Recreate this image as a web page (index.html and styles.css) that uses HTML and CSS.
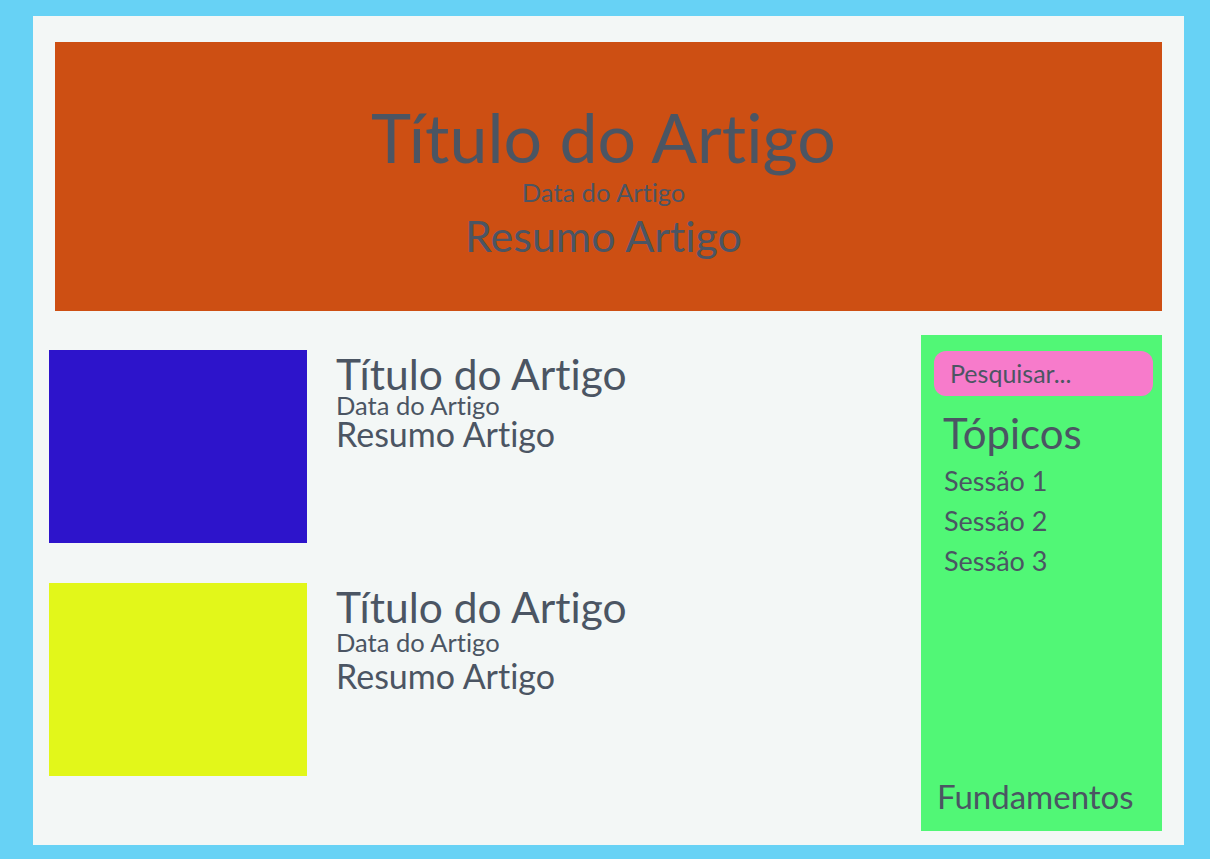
FILE: index.html
```html
<!DOCTYPE html>
<html lang="pt-BR">
<head>
<meta charset="utf-8">
<title>Blog</title>
<link rel="stylesheet" href="styles.css">
</head>
<body>
<div class="page">
  <header class="hero">
    <h1 class="hero-title">Título do Artigo</h1>
    <p class="hero-date">Data do Artigo</p>
    <p class="hero-summary">Resumo Artigo</p>
  </header>
  <div class="content">
    <main class="articles">
      <article class="article">
        <div class="thumb thumb-blue"></div>
        <div class="article-text">
          <h2 class="article-title">Título do Artigo</h2>
          <p class="article-date">Data do Artigo</p>
          <p class="article-summary">Resumo Artigo</p>
        </div>
      </article>
      <article class="article article-alt">
        <div class="thumb thumb-yellow"></div>
        <div class="article-text">
          <h2 class="article-title">Título do Artigo</h2>
          <p class="article-date">Data do Artigo</p>
          <p class="article-summary">Resumo Artigo</p>
        </div>
      </article>
    </main>
    <aside class="sidebar">
      <div class="search">Pesquisar...</div>
      <h3 class="topics-title">Tópicos</h3>
      <ul class="topics">
        <li>Sessão 1</li>
        <li>Sessão 2</li>
        <li>Sessão 3</li>
      </ul>
      <div class="footer-link">Fundamentos</div>
    </aside>
  </div>
</div>
</body>
</html>
```

FILE: styles.css
```css
* { box-sizing: border-box; }
html, body { margin: 0; padding: 0; }
body {
  background: #67d2f5;
  font-family: Lato, "Open Sans", sans-serif;
  font-variant-ligatures: none;
  font-feature-settings: "liga" 0, "clig" 0;
  color: #4b5563;
  padding: 16px 26px 14px 33px;
  height: 859px;
}
h1, h2, h3, p, ul { margin: 0; padding: 0; font-weight: 400; }
ul { list-style: none; }

.page {
  background: #f3f7f6;
  height: 829px;
  padding: 26px 22px 14px 16px;
  display: flex;
  flex-direction: column;
}

.hero {
  background: #cd4f13;
  height: 269px;
  margin-left: 6px;
  display: flex;
  flex-direction: column;
  align-items: center;
  padding: 60px 10px 0 0;
}
.hero-title { font-size: 68px; line-height: 70px; }
.hero-date { font-size: 25.5px; line-height: 40px; }
.hero-summary { font-size: 43px; line-height: 47px; }

.content {
  flex: 1;
  display: flex;
  margin-top: 24px;
}
.articles {
  flex: 1;
  padding-top: 15px;
  display: flex;
  flex-direction: column;
  gap: 40px;
}
.article { display: flex; gap: 29px; }
.thumb { width: 258px; height: 193px; flex: none; }
.thumb-blue { background: #2d14cb; }
.thumb-yellow { background: #e2f71a; }

.article-text { padding-top: 3px; }
.article-title { font-size: 42.5px; line-height: 42px; }
.article-date { font-size: 25.5px; line-height: 20px; }
.article-summary { font-size: 34px; line-height: 38px; }
.article-alt .article-date { margin-top: 4px; }
.article-alt .article-summary { margin-top: 5px; }

.sidebar {
  width: 241px;
  flex: none;
  background: #51f776;
  display: flex;
  flex-direction: column;
  padding: 16px 9px 16px 13px;
}
.search {
  background: #f77bcb;
  border-radius: 12px;
  height: 45px;
  padding-left: 16px;
  font-size: 25px;
  line-height: 44px;
}
.topics-title { font-size: 42px; line-height: 48px; margin: 13px 0 0 9px; }
.topics { margin: 4px 0 0 10px; }
.topics li { font-size: 27px; line-height: 40px; }
.footer-link { margin-top: auto; margin-left: 3px; font-size: 33px; line-height: 38px; }
```
